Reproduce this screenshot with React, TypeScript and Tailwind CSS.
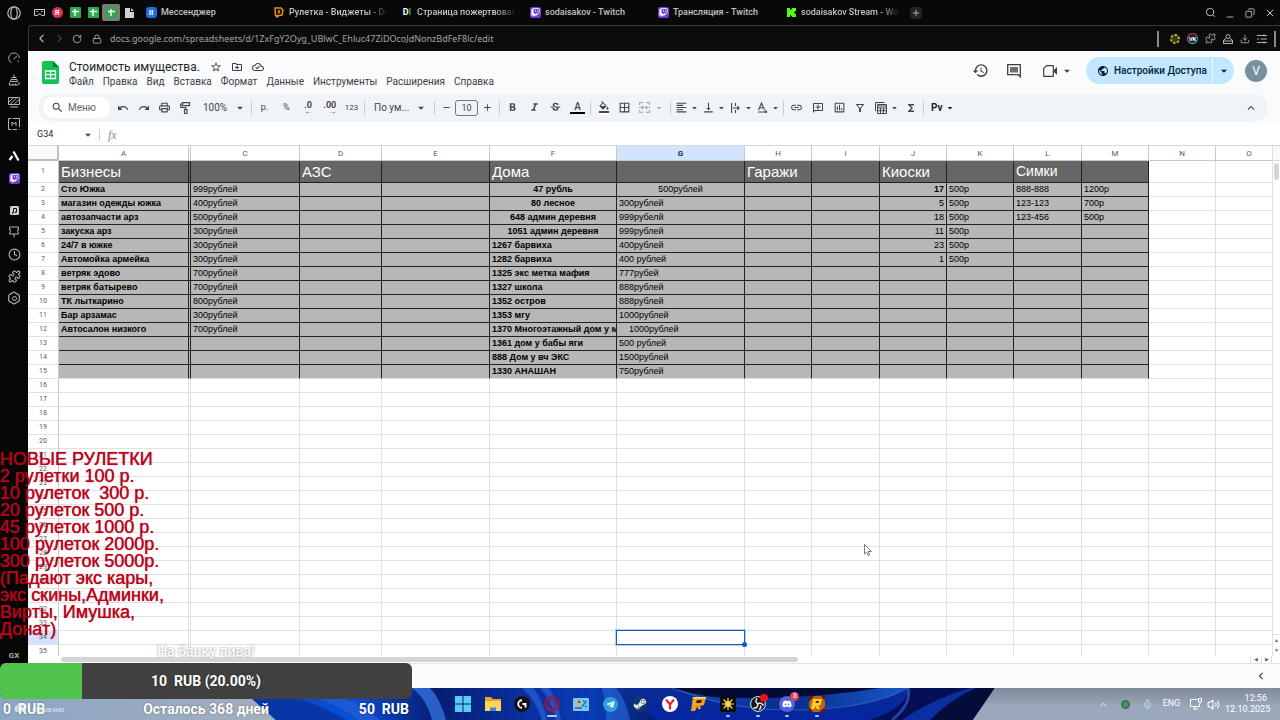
import type { ReactNode } from 'react';
import {
    MdAdd,
    MdArrowDropDown,
    MdBorderAll,
    MdChevronLeft,
    MdExpandLess,
    MdFormatAlignLeft,
    MdFormatBold,
    MdFormatColorFill,
    MdFormatItalic,
    MdFunctions,
    MdHistory,
    MdLink,
    MdOutlineAddComment,
    MdOutlineCloudDone,
    MdOutlineDriveFileMove,
    MdOutlineFilterAlt,
    MdOutlineInsertChart,
    MdOutlinePrint,
    MdPublic,
    MdRedo,
    MdRemove,
    MdSearch,
    MdStarBorder,
    MdStrikethroughS,
    MdUndo,
    MdVerticalAlignBottom,
} from 'react-icons/md';
import { FaDiscord, FaSteamSymbol, FaTelegramPlane, FaTwitch } from 'react-icons/fa';
import {
    ChevronLeft,
    ChevronRight,
    ChevronUp,
    Clock,
    Copy,
    Download,
    Hexagon,
    Lock,
    Mic,
    Minus,
    Plus,
    Puzzle,
    RotateCw,
    Search,
    Volume2,
    X,
} from 'lucide-react';

type Cell = { text: string; bold?: boolean; align?: 'center' | 'right' };
type Row = Record<string, Cell>;

const COLUMNS = [
    { name: 'A', width: 130 },
    { name: 'B', width: 2 },
    { name: 'C', width: 109 },
    { name: 'D', width: 82 },
    { name: 'E', width: 108 },
    { name: 'F', width: 127 },
    { name: 'G', width: 128 },
    { name: 'H', width: 67 },
    { name: 'I', width: 68 },
    { name: 'J', width: 67 },
    { name: 'K', width: 67 },
    { name: 'L', width: 68 },
    { name: 'M', width: 67 },
    { name: 'N', width: 67 },
    { name: 'O', width: 67 },
];

const FILLED_COLUMNS = 'ABCDEFGHIJKLM';
const LAST_FILLED_ROW = 15;
const ROW_COUNT = 35;

const TITLES: Record<string, string> = { A: 'Бизнесы', D: 'АЗС', F: 'Дома', H: 'Гаражи', J: 'Киоски', L: 'Симки' };

const BUSINESSES = [
    ['Сто Южка', '999рублей'],
    ['магазин одежды южка', '400рублей'],
    ['автозапчасти арз', '500рублей'],
    ['закуска арз', '300рублей'],
    ['24/7 в южке', '300рублей'],
    ['Автомойка армейка', '300рублей'],
    ['ветряк эдово', '700рублей'],
    ['ветряк батырево', '700рублей'],
    ['ТК лыткарино', '800рублей'],
    ['Бар арзамас', '300рублей'],
    ['Автосалон низкого', '700рублей'],
];

const HOUSES = [
    ['47 рубль', '500рублей'],
    ['80 лесное', '300рублей'],
    ['648 админ деревня', '999рубелй'],
    ['1051 админ деревня', '999рублей'],
    ['1267 барвиха', '400рублей'],
    ['1282 барвиха', '400 рублей'],
    ['1325 экс метка мафия', '777рубей'],
    ['1327 школа', '888рублей'],
    ['1352 остров', '888рублей'],
    ['1353 мгу', '1000рублей'],
    ['1370 Многоэтажный дом у м', '    1000рублей'],
    ['1361 дом у бабы яги', '500 рублей'],
    ['888 Дом у вч ЭКС', '1500рублей'],
    ['1330 АНАШАН', '750рублей'],
];

const KIOSKS = ['17', '5', '18', '11', '23', '1'];
const SIMS = [['888-888', '1200р'], ['123-123', '700р'], ['123-456', '500р']];

function buildRow(row: number): Row {
    const i = row - 2;
    const cells: Row = {};
    if (i < 0) return cells;
    if (BUSINESSES[i]) {
        cells.A = { text: BUSINESSES[i][0], bold: true };
        cells.C = { text: BUSINESSES[i][1] };
    }
    if (HOUSES[i]) {
        cells.F = { text: HOUSES[i][0], bold: true, align: i < 4 ? 'center' : undefined };
        cells.G = { text: HOUSES[i][1], align: i === 0 ? 'center' : undefined };
    }
    if (KIOSKS[i]) {
        cells.J = { text: KIOSKS[i], bold: i === 0, align: 'right' };
        cells.K = { text: '500р' };
    }
    if (SIMS[i]) {
        cells.L = { text: SIMS[i][0] };
        cells.M = { text: SIMS[i][1] };
    }
    return cells;
}

const MENU = ['Файл', 'Правка', 'Вид', 'Вставка', 'Формат', 'Данные', 'Инструменты', 'Расширения', 'Справка'];

const ROULETTES = [
    'НОВЫЕ РУЛЕТКИ',
    '2 рулетки 100 р.',
    '10 рулеток  300 р.',
    '20 рулеток 500 р.',
    '45 рулеток 1000 р.',
    '100 рулеток 2000р.',
    '300 рулеток 5000р.',
    '(Падают экс кары,',
    'экс скины,Админки,',
    'Вирты, Имушка,',
    'Донат)',
];

/* ---------- browser chrome ---------- */

function OperaIcon() {
    return (
        <svg className="w-[14px] h-[14px]" viewBox="0 0 14 14" fill="none" stroke="#c9c9c9" strokeWidth="1.1">
            <circle cx="7" cy="7" r="6.2" />
            <ellipse cx="7" cy="7" rx="3.2" ry="6" />
        </svg>
    )
}

function GreenSheetIcon() {
    return (
        <svg className="w-[11px] h-[11px]" viewBox="0 0 11 11">
            <rect width="11" height="11" rx="1" fill="#2fa84f" />
            <path d="M2 4.5h7M5 2v7" stroke="#fff" strokeWidth="1.4" />
        </svg>
    )
}

function TwitchBadge() {
    return <FaTwitch className="w-[11px] h-[11px] p-px rounded-xs bg-[#6d3fd0] text-white" />;
}

function Tab({ icon, title, fade }: { icon: ReactNode; title: string; fade?: boolean }) {
    return (
        <button type="button" className="flex items-center w-32 min-w-0 h-full gap-1 pl-[3px] pr-2.5">
            <span className="flex items-center justify-center w-3 h-3 shrink-0">{icon}</span>
            <span className={`overflow-hidden whitespace-nowrap text-[9px] font-medium text-[#c4c4c4] ${fade ? 'mask-r-from-80%' : ''}`}>{title}</span>
        </button>
    )
}

function TabBar() {
    return (
        <header className="flex items-center h-[25px] shrink-0 bg-[#080808] text-[#c9c9c9]">
            <button type="button" aria-label="Opera" className="flex justify-center w-7 mr-0.5"><OperaIcon /></button>
            <div className="flex items-center mr-1">
                <button type="button" aria-label="Игры" className="flex justify-center w-[18px]">
                    <svg className="w-[11px] h-[11px]" viewBox="0 0 11 11" fill="none" stroke="currentColor">
                        <path d="M.5 2.5h10v6h-3l-1-1.5h-2l-1 1.5h-3z" />
                        <path d="M2.5 4.5h1.5M7 4.5h1.5" />
                    </svg>
                </button>
                <button type="button" className="flex justify-center w-[18px]">
                    <span className="w-[11px] h-[11px] rounded-full bg-[#e0314b] text-white text-[8px] leading-[11px] font-bold">Я</span>
                </button>
                <button type="button" aria-label="Таблица 1" className="flex justify-center w-[18px]"><GreenSheetIcon /></button>
                <button type="button" aria-label="Таблица 2" className="flex justify-center w-[18px]"><GreenSheetIcon /></button>
                <button type="button" aria-label="Таблица 3" className="flex items-center justify-center w-[18px] h-[17px] rounded-xs bg-[#777c77]"><GreenSheetIcon /></button>
                <button type="button" aria-label="Документ" className="flex justify-center w-[18px]">
                    <svg className="w-[9px] h-[10px]" viewBox="0 0 9 10"><path d="M0 0h5v4h4v6H0zM6 0l3 3H6z" fill="#d0d0d0" /></svg>
                </button>
            </div>
            <Tab title="Мессенджер" icon={<span className="w-[11px] h-[11px] rounded-[3px] bg-[#1f6fe0] text-white text-[8px] leading-[11px] font-bold">II</span>} />
            <Tab
                fade
                title="Рулетка - Виджеты - Donate"
                icon={
                    <svg className="w-[10px] h-[11px]" viewBox="0 0 10 11" fill="none" stroke="#f28a1c" strokeWidth="1.5">
                        <path d="M1 1h6l2 2-1 5-3 .5L3 10V8.5H1.5z" />
                        <path d="M4.5 3.5h1.5l-.5 2.5H4z" strokeWidth="1" />
                    </svg>
                }
            />
            <Tab fade title="Страница пожертвований" icon={<span className="text-[9px] font-bold text-white">D<span className="text-[#2fa84f]">I</span></span>} />
            <Tab title="sodaisakov - Twitch" icon={<TwitchBadge />} />
            <Tab title="Трансляция - Twitch" icon={<TwitchBadge />} />
            <Tab
                fade
                title="sodaisakov Stream - Watch Live"
                icon={
                    <svg className="w-[9px] h-[9px]" viewBox="0 0 9 9"><path d="M0 0h3v2h1V1h1V0h4v3H8v1H7v1h1v1h1v3H5V8H4V7H3v2H0z" fill="#53fc18" /></svg>
                }
            />
            <button type="button" aria-label="Новая вкладка" className="flex items-center justify-center w-3 h-3 rounded-xs bg-[#222]"><Plus className="w-[10px] h-[10px]" /></button>
            <div className="flex items-center ml-auto">
                <button type="button" aria-label="Поиск" className="flex justify-center w-5"><Search className="w-[11px] h-[11px]" /></button>
                <button type="button" aria-label="Свернуть" className="flex justify-center w-5 pt-2"><Minus className="w-[10px] h-[10px]" /></button>
                <button type="button" aria-label="Развернуть" className="flex justify-center w-5"><Copy className="w-[10px] h-[10px] -scale-x-100" /></button>
                <button type="button" aria-label="Закрыть" className="flex justify-center w-5"><X className="w-3 h-3" /></button>
            </div>
        </header>
    )
}

function SideBar() {
    const line = { className: 'w-3 h-3', viewBox: '0 0 12 12', fill: 'none', stroke: 'currentColor' };
    const groups: { name: string; icon: ReactNode }[][] = [
        [
            { name: 'GX Control', icon: <svg {...line}><path d="M3.5 10.7A5.2 5.2 0 1 1 11.2 6M5.5 7.2l3.5-3.4M10 8.5l.5 1.5" /></svg> },
            { name: 'GX Cleaner', icon: <svg {...line}><path d="M6 .5v3M3.5 3.5h5M3 5.5h6l.5 2h-7zM2 8l-1 3h9M5 11V9.5M7.5 11V9.5M11 8v3" /></svg> },
            { name: 'GX Mods', icon: <svg {...line}><path d="M.5 1.5h11v7H.5zM2 11h8M1 6l4.5-4.5M2 8.5l7-7M6 8.5l5.5-5.5" /></svg> },
            { name: 'GX Music', icon: <svg {...line}><path d="M3.5.5h-3v11h3M5 11.5h4M11.5 9V.5H5M11.5 11v.5M4 8V4l2 2 2-2v4" /></svg> },
        ],
        [
            { name: 'Aria', icon: <svg {...line} strokeWidth="2.2" stroke="#fff"><path d="M1.5 10l3-4M5.5 1.5L10.5 10.5" /></svg> },
            { name: 'Twitch', icon: <TwitchBadge /> },
        ],
        [
            { name: 'Плеер', icon: <svg className="w-[9px] h-[9px]" viewBox="0 0 9 9"><rect width="9" height="9" rx="1.5" fill="#cfcfcf" /><path d="M3.5 6.5V2.5h3v3.5" stroke="#111" fill="none" /><path d="M2 6h1.5v1.5H2zM5 5.5h1.5V7H5z" fill="#111" /></svg> },
            { name: 'Закрепления', icon: <svg {...line}><path d="M1.5 1h9v2.5H9.5L10.5 8h-9l1-4.5h-1zM6 8v3.5" /></svg> },
            { name: 'История', icon: <Clock className="w-[13px] h-[13px]" /> },
            { name: 'Расширения', icon: <Puzzle className="w-[13px] h-[13px]" /> },
            { name: 'Настройки', icon: <span className="grid place-items-center"><Hexagon className="col-start-1 row-start-1 w-[14px] h-[14px]" /><span className="col-start-1 row-start-1 w-[5px] h-[5px] rounded-full border border-current" /></span> },
        ],
    ];

    return (
        <nav className="flex flex-col items-center gap-[10px] w-7 shrink-0 pt-[22px] bg-[#060606] text-[#b5b5b5]">
            {groups.map((group, i) => (
                <div key={i} className="flex flex-col">
                    {group.map(({ name, icon }) => (
                        <button key={name} type="button" aria-label={name} className="flex items-center justify-center w-7 h-[22px]">{icon}</button>
                    ))}
                </div>
            ))}
            <span className="mt-auto mb-[26px] text-[8px] leading-3 font-semibold">GX</span>
        </nav>
    )
}

function AddressBar() {
    return (
        <div className="flex items-center h-[26px] shrink-0 pl-[3px] border-t border-l border-[#3a3a3a] rounded-tl-sm bg-[#0b0b0b] text-[#b5b5b5]">
            <button type="button" aria-label="Назад" className="flex justify-center w-[18px]"><ChevronLeft className="w-[13px] h-[13px]" /></button>
            <button type="button" aria-label="Вперёд" className="flex justify-center w-[18px] text-[#444]"><ChevronRight className="w-[13px] h-[13px]" /></button>
            <button type="button" aria-label="Обновить" className="flex justify-center w-[18px]"><RotateCw className="w-[10px] h-[10px]" /></button>
            <Lock className="w-[10px] h-[10px] ml-[6px] mr-2" />
            <input
                aria-label="Адрес"
                className="flex-1 min-w-0 text-[9px] leading-4 font-['Noto_Sans'] text-[#a5a5a5] outline-none"
                defaultValue="docs.google.com/spreadsheets/d/1ZxFgY2Oyg_UBlwC_Ehluc47ZiDOcoJdNonzBdFeF8lc/edit"
            />
            <div className="flex items-center gap-[7px] mr-1">
                <span className="w-0.5 h-4 mr-1 bg-[#8a8a8a]" />
                <span className="w-[10px] h-[10px] rounded-full border-2 border-dotted border-[#c6c23a] bg-[#3c3b12]" />
                <span className="flex items-center justify-center w-[11px] h-[11px] rounded-full bg-[conic-gradient(#e33,#38f,#3c6,#b3f,#e33)] p-px">
                    <span className="w-full h-full rounded-full bg-[#222] text-white text-[6px] leading-[9px] font-bold text-center">VK</span>
                </span>
                <Puzzle className="w-[11px] h-[11px]" />
                <svg className="w-[10px] h-[10px]" viewBox="0 0 10 10" fill="none" stroke="currentColor">
                    <circle cx="5" cy="2.5" r="2" />
                    <path d="M3 4.5L.5 6v3.5h9V6L7 4.5M.5 7h9" />
                </svg>
                <Download className="w-[10px] h-[10px]" />
                <svg className="w-[10px] h-[10px]" viewBox="0 0 10 10" stroke="currentColor">
                    <path d="M0 1.5h10M0 5h2M3.5 5H10M0 8.5h10M7 .5v2M7 7.5v2" />
                </svg>
                <span className="w-0.5 h-4 bg-[#8a8a8a]" />
            </div>
        </div>
    )
}

/* ---------- spreadsheet ---------- */

function DocHeader() {
    return (
        <div className="flex items-center h-[43px] shrink-0 pl-3 pr-[13px] bg-[#f9fbfd] text-[#3c4043]">
            <svg className="w-[21px] h-[23px] mr-2" viewBox="0 0 21 23">
                <path d="M4 0h9l6 6v15a2 2 0 0 1-2 2H4a2 2 0 0 1-2-2V2a2 2 0 0 1 2-2z" fill="#11c152" />
                <path d="M13 0l6 6h-6z" fill="#0a7a3c" />
                <path d="M5.5 10h10v7.5h-10zM5.5 13.7h10M10.5 10v7.5" fill="none" stroke="#fff" strokeWidth="1.3" />
            </svg>
            <div className="flex flex-col pt-0.5">
                <div className="flex items-center h-[17px] gap-[9px]">
                    <input aria-label="Название" className="w-[132px] text-[12px] leading-4 text-[#1f1f1f] outline-none" defaultValue="Стоимость имущества." />
                    <button type="button" aria-label="Пометить"><MdStarBorder className="w-3 h-3" /></button>
                    <button type="button" aria-label="Переместить"><MdOutlineDriveFileMove className="w-3 h-3" /></button>
                    <button type="button" aria-label="Статус"><MdOutlineCloudDone className="w-3 h-3" /></button>
                </div>
                <div className="flex gap-[9px] text-[10px] leading-[14px]">
                    {MENU.map((item) => <button key={item} type="button">{item}</button>)}
                </div>
            </div>
            <div className="flex items-center ml-auto pb-1">
                <button type="button" aria-label="История изменений" className="flex justify-center w-[33px]"><MdHistory className="w-[17px] h-[17px]" /></button>
                <button type="button" aria-label="Комментарии" className="flex justify-center w-[33px]">
                    <svg className="w-[14px] h-[14px]" viewBox="0 0 14 14">
                        <path d="M.7.7h12.6v12l-2-2H.7z" fill="none" stroke="currentColor" strokeWidth="1.3" />
                        <path d="M3 3h8v5.5H3z" fill="currentColor" opacity=".75" />
                    </svg>
                </button>
                <button type="button" aria-label="Встреча" className="flex items-center justify-center w-[56px] gap-[2px]">
                    <svg className="w-[15px] h-3" viewBox="0 0 15 12">
                        <path d="M3.5.7h6.8v10.6H.7V3.5z" fill="none" stroke="currentColor" strokeWidth="1.2" strokeLinejoin="round" />
                        <path d="M11 5l3-3v8l-3-3z" fill="currentColor" />
                    </svg>
                    <MdArrowDropDown className="w-[14px] h-[14px]" />
                </button>
                <div className="flex items-center h-[27px] mr-[11px] rounded-full bg-[#c2e7ff] text-[#001d35]">
                    <button type="button" className="flex items-center h-full w-[127px] pl-[11px] gap-[5px] border-r border-[#eef8ff] text-[10px] font-medium whitespace-nowrap">
                        <MdPublic className="w-3 h-3 shrink-0" />
                        Настройки Доступа
                    </button>
                    <button type="button" aria-label="Доступ" className="flex justify-center w-[21px]"><MdArrowDropDown className="w-[14px] h-[14px]" /></button>
                </div>
                <button type="button" className="w-[22px] h-[22px] rounded-full bg-[#78909c] text-white text-xs">V</button>
            </div>
        </div>
    )
}

function Separator() {
    return <span className="w-px h-[14px] shrink-0 mx-0.5 bg-[#c7cad0]" />;
}

function ToolButton({ label, children }: { label: string; children: ReactNode }) {
    return <button type="button" aria-label={label} className="flex items-center justify-center w-[21px] h-5 text-[9px]">{children}</button>;
}

function DropButton({ label, children }: { label: string; children: ReactNode }) {
    return (
        <button type="button" aria-label={label} className="flex items-center h-5">
            <span className="flex justify-center w-4">{children}</span>
            <MdArrowDropDown className="w-[11px] h-3" />
        </button>
    )
}

function Toolbar() {
    const icon = 'w-[13px] h-[13px]';
    return (
        <div className="shrink-0 bg-[#f9fbfd] pl-[10px] pr-3 pb-[3px]">
            <div className="flex items-center h-[27px] pl-[5px] pr-[10px] rounded-full bg-[#f0f4f9] text-[#444746]">
                <label className="flex items-center w-[67px] h-[21px] mr-0.5 pl-2 gap-1 rounded-full bg-white">
                    <MdSearch className={`${icon} shrink-0`} />
                    <input aria-label="Меню" placeholder="Меню" className="min-w-0 w-10 text-[10px] placeholder:text-[#5f6368] outline-none" />
                </label>
                <ToolButton label="Отменить"><MdUndo className="w-3 h-3" /></ToolButton>
                <ToolButton label="Повторить"><MdRedo className="w-3 h-3" /></ToolButton>
                <ToolButton label="Печать"><MdOutlinePrint className={icon} /></ToolButton>
                <ToolButton label="Копировать форматирование">
                    <svg className="w-[11px] h-3" viewBox="0 0 11 12" fill="none" stroke="currentColor" strokeWidth="1.2"><path d="M2.5.7h7v3h-7zM2.5 2H.7v3.5h5V7.5M4.5 7.5h2.5v4H4.5z" /></svg>
                </ToolButton>
                <label className="flex items-center w-[53px] pl-[7px]">
                    <select aria-label="Масштаб" className="appearance-none w-[30px] text-[10px] outline-none"><option>100%</option></select>
                    <MdArrowDropDown className="w-[14px] h-[14px]" />
                </label>
                <Separator />
                <div className="flex justify-between w-[108px]">
                    <ToolButton label="Рубли">р.</ToolButton>
                    <ToolButton label="Проценты">%</ToolButton>
                    <ToolButton label="Меньше знаков">
                        <span className="flex flex-col items-end text-[9px] leading-[7px] font-bold">.0<span className="text-[8px] leading-[5px]">←</span></span>
                    </ToolButton>
                    <ToolButton label="Больше знаков">
                        <span className="flex flex-col items-end text-[9px] leading-[7px] font-bold">.00<span className="text-[8px] leading-[5px]">→</span></span>
                    </ToolButton>
                    <ToolButton label="Форматы"><span className="text-[8px]">123</span></ToolButton>
                </div>
                <Separator />
                <label className="flex items-center w-[65px] pl-[7px]">
                    <select aria-label="Шрифт" className="appearance-none w-10 text-[10px] outline-none"><option>По ум...</option></select>
                    <MdArrowDropDown className="w-[14px] h-[14px]" />
                </label>
                <Separator />
                <button type="button" aria-label="Уменьшить" className="flex justify-center w-[18px]"><MdRemove className="w-[11px] h-[11px]" /></button>
                <input aria-label="Размер шрифта" defaultValue="10" className="w-[23px] h-4 rounded-[3px] border border-[#747775] text-center text-[9px] outline-none" />
                <button type="button" aria-label="Увеличить" className="flex justify-center w-[19px]"><MdAdd className="w-[11px] h-[11px]" /></button>
                <Separator />
                <div className="flex justify-between w-[86px]">
                    <ToolButton label="Жирный"><MdFormatBold className={icon} /></ToolButton>
                    <ToolButton label="Курсив"><MdFormatItalic className={icon} /></ToolButton>
                    <ToolButton label="Зачёркнутый"><MdStrikethroughS className={icon} /></ToolButton>
                    <ToolButton label="Цвет текста">
                        <span className="w-[15px] border-b-2 border-black text-[10px] leading-[11px] font-medium">A</span>
                    </ToolButton>
                </div>
                <Separator />
                <div className="flex items-center w-[75px]">
                    <ToolButton label="Заливка">
                        <span className="border-b-2 border-white"><MdFormatColorFill className="w-3 h-3" /></span>
                    </ToolButton>
                    <ToolButton label="Границы"><MdBorderAll className={icon} /></ToolButton>
                    <button type="button" aria-label="Объединить" disabled className="flex items-center gap-0.5 pl-1 text-[#a9acb0]">
                        <svg className="w-[11px] h-[11px]" viewBox="0 0 11 11" fill="none" stroke="currentColor" strokeWidth="1.2">
                            <path d="M.6 3V.6H4M7 .6h3.4V3M.6 8v2.4H4M7 10.4h3.4V8M0 5.5h4M11 5.5H7M3 4l1.5 1.5L3 7M8 4L6.5 5.5 8 7" />
                        </svg>
                        <MdArrowDropDown className="w-[14px] h-3" />
                    </button>
                </div>
                <Separator />
                <DropButton label="Выравнивание"><MdFormatAlignLeft className={icon} /></DropButton>
                <DropButton label="По вертикали"><MdVerticalAlignBottom className={icon} /></DropButton>
                <DropButton label="Перенос">
                    <svg className="w-[9px] h-[10px]" viewBox="0 0 9 10" fill="none" stroke="currentColor" strokeWidth="1.1"><path d="M.6 0v10M4.5 0v3M4.5 7v3M2 5h6M6.3 3.2L8.2 5 6.3 6.8" /></svg>
                </DropButton>
                <DropButton label="Поворот">
                    <svg className="w-[11px] h-[11px]" viewBox="0 0 11 11" fill="none" stroke="currentColor" strokeWidth="1.1"><path d="M1.5 8L4.5 1 7.5 8M2.5 5.7h4M1 10h8.5M8 8.5l1.7 1.5L8 11" /></svg>
                </DropButton>
                <Separator />
                <div className="flex justify-between w-[85px] mr-0.5">
                    <ToolButton label="Ссылка"><MdLink className={icon} /></ToolButton>
                    <ToolButton label="Комментарий"><MdOutlineAddComment className="w-3 h-3 -scale-x-100" /></ToolButton>
                    <ToolButton label="Диаграмма"><MdOutlineInsertChart className={icon} /></ToolButton>
                    <ToolButton label="Фильтр"><MdOutlineFilterAlt className="w-3 h-3" /></ToolButton>
                </div>
                <DropButton label="Таблицы">
                    <svg className="w-3 h-3" viewBox="0 0 12 12" fill="none" stroke="currentColor"><path d="M.5 9V.5H9.5M2.5 2.5h9v9h-9zM2.5 4h9M2.5 6h9M2.5 8.7h9M5.5 6v5.5M8.5 6v5.5" /></svg>
                </DropButton>
                <ToolButton label="Функции"><MdFunctions className="w-3 h-3" /></ToolButton>
                <Separator />
                <button type="button" className="flex items-center h-5 pl-[5px] text-[10px] font-bold text-[#1f1f1f]">
                    Pv
                    <MdArrowDropDown className="w-[14px] h-3" />
                </button>
                <button type="button" aria-label="Скрыть меню" className="ml-auto"><MdExpandLess className="w-[14px] h-[14px]" /></button>
            </div>
        </div>
    )
}

function FormulaBar() {
    return (
        <div className="flex items-center h-[22px] shrink-0 pt-px pl-[9px] border-b border-[#d5d7da] bg-white text-[#444746]">
            <input aria-label="Ячейка" defaultValue="G34" className="w-[44px] text-[9px] text-[#1f1f1f] outline-none" />
            <MdArrowDropDown className="w-[14px] h-[14px]" />
            <span className="w-px h-3 ml-1 mr-2 bg-[#d0d0d0]" />
            <label htmlFor="formula" className="font-['Liberation_Serif'] italic text-[12px] text-[#8a8d91]">fx</label>
            <input id="formula" className="flex-1 min-w-0 ml-2 text-[9px] outline-none" />
        </div>
    )
}

function GridCell({ column, row, cell }: { column: string; row: number; cell?: Cell }) {
    const filled = FILLED_COLUMNS.includes(column) && row <= LAST_FILLED_ROW;

    if (row === 1 && filled) {
        return (
            <td className={`p-0 border-r border-b border-[#222] bg-[#666666] text-white whitespace-nowrap leading-[21px] ${column === 'B' ? '' : 'pl-0.5'} ${column === 'L' ? 'text-[14px]' : 'text-[15px]'}`}>
                {TITLES[column]}
            </td>
        )
    }

    if (column === 'G' && row === 34) {
        return (
            <td className="relative p-0 border-r border-b border-[#e1e1e1]">
                <span className="absolute -top-px -left-px -right-px -bottom-px border border-[#1a5fb4] outline outline-[#1a5fb4]/30" />
                <span className="absolute -right-[3px] -bottom-[3px] w-[5px] h-[5px] rounded-full bg-[#0b57d0]" />
            </td>
        )
    }

    const colors = filled ? 'border-r-[#222] bg-[#b7b7b7] text-black' : 'border-r-[#e1e1e1]';
    const bottom = filled && row < LAST_FILLED_ROW ? 'border-b-[#222]' : 'border-b-[#e1e1e1]';
    const align = cell?.align === 'center' ? 'text-center' : cell?.align === 'right' ? 'text-right' : 'text-left';
    return (
        <td className={`p-0 ${column === 'B' ? '' : 'px-0.5'} border-r border-b overflow-hidden whitespace-pre ${colors} ${bottom} ${align} ${cell?.bold ? 'font-bold' : ''}`}>
            {cell?.text}
        </td>
    )
}

function Grid() {
    const rows = Array.from({ length: ROW_COUNT }, (_, i) => i + 1);
    return (
        <div className="flex-1 min-w-0 overflow-hidden">
            <table className="w-[1255px] min-w-full table-fixed border-separate border-spacing-0 font-['Liberation_Sans'] text-[9px] leading-[13px]">
                <colgroup>
                    <col style={{ width: 31 }} />
                    {COLUMNS.map(({ name, width }) => <col key={name} style={{ width }} />)}
                </colgroup>
                <thead className="font-[Roboto] text-[8px] text-[#575a5e]">
                    <tr className="h-[15px]">
                        <th className="p-0 border-r-2 border-b-2 border-[#c0c0c0] bg-[#f8f9fa]" />
                        {COLUMNS.map(({ name }) => (
                            <th
                                key={name}
                                scope="col"
                                className={`p-0 border-r border-b border-[#c7c9cc] ${name === 'G' ? 'bg-[#d3e3fd] font-bold text-[#0b2a5b]' : 'font-normal'}`}
                            >
                                {name === 'B' ? '' : name}
                            </th>
                        ))}
                    </tr>
                </thead>
                <tbody>
                    {rows.map((row) => {
                        const cells = buildRow(row);
                        return (
                            <tr key={row} className={row === 1 ? 'h-[22px]' : 'h-[14px]'}>
                                <th scope="row" className={`p-0 border-r border-b border-r-[#c7c9cc] border-b-[#e1e1e1] font-[Roboto] text-[7px] font-normal text-[#575a5e] ${row === 34 ? 'bg-[#d3e3fd]' : ''}`}>
                                    {row}
                                </th>
                                {COLUMNS.map(({ name }) => <GridCell key={name} column={name} row={row} cell={cells[name]} />)}
                            </tr>
                        )
                    })}
                </tbody>
            </table>
        </div>
    )
}

function Sheet() {
    return (
        <>
            <div className="flex flex-1 min-h-0 bg-white">
                <Grid />
                <div className="flex flex-col items-center w-2 shrink-0 border-l border-[#e1e1e1] text-[5px] text-[#666]">
                    <div className="w-full h-[15px] mb-0.5 border-b border-[#d5d7da] bg-[#f8f9fa]" />
                    <div className="w-[5px] h-[17px] rounded-full bg-[#d5d5d5]" />
                    <div className="w-full mt-auto h-[11px] border-t border-[#e1e1e1] text-center leading-[10px]">▲</div>
                    <div className="w-full h-[11px] text-center leading-[10px]">▼</div>
                </div>
            </div>
            <div className="flex items-center h-[7px] shrink-0 pl-[33px] bg-white text-[5px] text-[#666]">
                <div className="flex-1"><div className="w-[62%] h-[5px] rounded-full bg-[#d5d5d5]" /></div>
                <span className="w-[11px] border-l border-[#e1e1e1] text-center">◀</span>
                <span className="w-[11px] mr-2 border-x border-[#e1e1e1] text-center">▶</span>
            </div>
            <div className="flex items-center justify-end h-[25px] shrink-0 pr-3 border-t border-[#e1e3e6] bg-[#f9fbfd] text-[#444746]">
                <button type="button" aria-label="Показать панель"><MdChevronLeft className="w-[14px] h-[14px]" /></button>
            </div>
        </>
    )
}

/* ---------- desktop ---------- */

function Wallpaper() {
    return (
        <svg className="absolute inset-0 w-full h-full" viewBox="0 0 1280 32" preserveAspectRatio="none" aria-hidden="true">
            <defs>
                <linearGradient id="haze" x1="0" x2="1"><stop offset="0" stopColor="#8ba6c4" /><stop offset=".2" stopColor="#a3aebf" /></linearGradient>
                <linearGradient id="bloom" x1="240" x2="995" y1="0" y2="0" gradientUnits="userSpaceOnUse">
                    <stop offset="0" stopColor="#0b3fc0" />
                    <stop offset=".15" stopColor="#0a4fd6" />
                    <stop offset=".26" stopColor="#061f74" />
                    <stop offset=".38" stopColor="#0a2fa0" />
                    <stop offset=".47" stopColor="#0a3db4" />
                    <stop offset=".56" stopColor="#061a60" />
                    <stop offset=".68" stopColor="#04103f" />
                    <stop offset="1" stopColor="#040c38" />
                </linearGradient>
                <linearGradient id="wave" x1="672" x2="908" y1="0" y2="0" gradientUnits="userSpaceOnUse">
                    <stop offset="0" stopColor="#1248b8" />
                    <stop offset=".5" stopColor="#082c8c" />
                    <stop offset="1" stopColor="#1658c8" />
                </linearGradient>
                <linearGradient id="deep" x1="0" x2="0" y1="0" y2="1"><stop offset="0" stopColor="#0a2c94" /><stop offset="1" stopColor="#0524a0" /></linearGradient>
                <linearGradient id="mist" x1="0" x2="0" y1="0" y2="1"><stop offset="0" stopColor="#7f8b9a" /><stop offset=".6" stopColor="#9ba7bb" /></linearGradient>
            </defs>
            <rect width="1280" height="32" fill="url(#haze)" />
            <path d="M240 0h755l-22 32H276z" fill="url(#bloom)" />
            <path d="M240 0l36 32h70Q300 6 256 0z" fill="#0636a8" />
            <path d="M262 0q70 8 96 32h22Q350 6 300 0z" fill="#2a63d8" opacity=".6" />
            <path d="M412 0q14 10 20 32h14Q440 10 430 0z" fill="#3a7ae8" opacity=".7" />
            <path d="M522 0q14 12 20 32h5q-4-20-14-32zM540 0q12 12 16 32h5q-4-20-12-32zM602 0q4 16 4 32h24q-4-20-14-32z" fill="#2f6fe0" opacity=".55" />
            <path d="M628 0q12 22 28 32h240q12-16 12-32z" fill="url(#deep)" />
            <path d="M672 0q60 24 130 22t106-22z" fill="url(#wave)" />
            <path d="M672 0q20 6 40 9 90 4 168-9z" fill="#030a34" />
            <path d="M672 0q60 24 130 22t106-22" stroke="#4a86e4" strokeWidth="1" fill="none" opacity=".5" />
            <path d="M870 32q40-14 38-32h62q-40 12-70 32z" fill="#050f56" />
            <path d="M908 0q4 16-16 32" stroke="#3c62d8" strokeWidth="3" fill="none" opacity=".6" />
            <path d="M970 0q-40 12-68 32h28q22-22 46-32z" fill="#0c2fa0" />
            <path d="M995 0h285v32H973z" fill="url(#mist)" />
        </svg>
    )
}

const TASKBAR_APPS: { name: string; icon: ReactNode; running?: boolean }[] = [
    {
        name: 'Пуск',
        icon: <svg className="w-4 h-4" viewBox="0 0 16 16"><path d="M0 0h7.5v7.5H0zM8.5 0H16v7.5H8.5zM0 8.5h7.5V16H0zM8.5 8.5H16V16H8.5z" fill="#5ccbf8" /></svg>,
    },
    {
        name: 'Проводник',
        icon: <svg className="w-4 h-[14px]" viewBox="0 0 16 14"><path d="M0 0h6l2 2h8v10H0z" fill="#e0a526" /><path d="M0 4h16v10H0z" fill="#ffd45c" /><path d="M5 10.5h6V14H5z" fill="#3f87d8" /></svg>,
    },
    {
        name: 'G HUB',
        icon: <svg className="w-4 h-4" viewBox="0 0 16 16" fill="none"><circle cx="8" cy="8" r="8" fill="#101216" /><path d="M8 4.2A3.8 3.8 0 1 0 8 11.8M8.5 8h3v3.5" stroke="#fff" strokeWidth="1.9" /></svg>,
    },
    {
        name: 'Opera GX',
        icon: <svg className="w-4 h-4" viewBox="0 0 16 16" fill="none" stroke="#8f1b52" strokeWidth="2.2"><circle cx="8" cy="8" r="6.6" /><ellipse cx="8" cy="8" rx="3" ry="6" strokeWidth="1.5" /></svg>,
        running: true,
    },
    {
        name: 'Панель',
        icon: <svg className="w-4 h-[13px]" viewBox="0 0 16 13"><rect width="16" height="13" rx="1" fill="#7ac8ee" /><circle cx="5" cy="5" r="2.6" fill="#f2b23a" /><path d="M5 5V2.4A2.6 2.6 0 0 1 7.6 5z" fill="#1e62b8" /><path d="M9 8.5L13.5 3M10 3h1.5M2 10h7M12 8.5h2" stroke="#1e62b8" strokeWidth="1.3" /></svg>,
    },
    { name: 'Telegram', icon: <span className="flex items-center justify-center w-[15px] h-[15px] rounded-full bg-[#2ba0d9]"><FaTelegramPlane className="w-[9px] h-[9px] text-white" /></span> },
    { name: 'Steam', icon: <span className="flex items-center justify-center w-4 h-4 rounded-full bg-[#10366f]"><FaSteamSymbol className="w-[14px] h-[14px] text-[#e4ebf4]" /></span> },
    {
        name: 'Яндекс',
        icon: <svg className="w-4 h-4" viewBox="0 0 16 16" fill="none"><circle cx="8" cy="8" r="8" fill="#fff" /><path d="M4 3.5l4 5 4-5M8 8v5.5" stroke="#e3262e" strokeWidth="2.2" /></svg>,
    },
    {
        name: 'Radmir',
        icon: <svg className="w-[15px] h-4" viewBox="0 0 15 16"><path d="M2 1h13l-2 8-4 1 1 3H7L6.5 10 4 15H0z" fill="#f4a11f" /><path d="M6 4h5l-1 3H5z" fill="#401c02" /><path d="M2 1h13l-.4 1.5H1.6z" fill="#ffe06a" /></svg>,
    },
    {
        name: 'Sun',
        icon: <svg className="w-4 h-4" viewBox="0 0 16 16"><rect width="16" height="16" rx="1" fill="#0a0a0a" /><circle cx="8" cy="8" r="3" fill="#f6d860" /><path d="M8 2v12M2 8h12M3.5 3.5l9 9M12.5 3.5l-9 9" stroke="#f6d860" strokeWidth="1.2" /></svg>,
        running: true,
    },
    {
        name: 'OBS',
        icon: (
            <span className="relative">
                <svg className="w-4 h-4" viewBox="0 0 16 16" fill="none" stroke="#e8e8e8"><circle cx="8" cy="8" r="7.4" fill="#16161a" /><path d="M7 2.5q-2.5 3.5 1 5.5M3.5 11.5q3.5 2 4.5-3.5M13.5 9.5Q10.5 5.5 8 8M9 13.5q2.5-1 1.5-4" strokeWidth="1.5" /></svg>
                <span className="absolute -top-0.5 -right-0.5 w-2 h-2 rounded-full bg-[#e5121b]" />
            </span>
        ),
        running: true,
    },
    {
        name: 'Discord',
        icon: (
            <span className="relative flex items-center justify-center w-4 h-4 rounded-full bg-[#5461d8]">
                <FaDiscord className="w-[10px] h-[10px] text-white" />
                <span className="absolute -top-1 -right-1 w-[9px] h-[9px] rounded-full bg-[#d9415b] text-white text-[7px] leading-[9px]">8</span>
            </span>
        ),
        running: true,
    },
    {
        name: 'Radmir CRMP',
        icon: <svg className="w-4 h-4" viewBox="0 0 16 16"><rect width="16" height="16" fill="#b8671a" /><path d="M0 0h5L0 6zM16 16h-6l6-5zM12 0h4v5zM0 11l4 5H0z" fill="#6d1414" /><path d="M4 3h9l-1.5 6-2.5.5L11 13H8l-1.5-3L5 13H2z" fill="#ffcf2e" /><path d="M7 5h3l-.5 2h-3z" fill="#5a2505" /></svg>,
        running: true,
    },
];

function Taskbar() {
    return (
        <footer className="relative h-8 shrink-0 overflow-hidden">
            <Wallpaper />
            <div className="relative grid grid-cols-[1fr_auto_1fr] items-center h-full text-white">
                <div className="flex items-end gap-1 h-full pl-3 pb-1 text-[8px] leading-3 text-[#e4eaf2]">
                    <svg className="w-4 h-4" viewBox="0 0 16 16"><path d="M4 12a4 4 0 0 1 1-7 5 5 0 0 1 8 2 3 3 0 0 1 0 5z" fill="#d3dde9" /></svg>
                    Облачно
                </div>
                <div className="flex w-[383px] h-full">
                    {TASKBAR_APPS.map(({ name, icon, running }) => (
                        <button key={name} type="button" aria-label={name} className="flex flex-col items-center justify-end flex-1 h-full">
                            <span className="flex items-center justify-center h-5">{icon}</span>
                            <span className={`h-0.5 mt-px mb-[3px] rounded-full ${running ? 'bg-[#b7c7de]' : ''} ${name === 'Opera GX' ? 'w-[10px]' : 'w-1'}`} />
                        </button>
                    ))}
                </div>
                <div className="flex items-center justify-end pr-[13px]">
                    <button type="button" aria-label="Скрытые значки" className="flex justify-center w-[22px]"><ChevronUp className="w-[11px] h-[11px]" /></button>
                    <span className="flex justify-center w-[22px]"><span className="w-[9px] h-[9px] rounded-full border-2 border-[#2f7a4c] bg-[#5b8f73]" /></span>
                    <button type="button" aria-label="Микрофон" className="flex justify-center w-[22px]"><Mic className="w-[11px] h-[11px] text-[#b9e2f4]" /></button>
                    <button type="button" className="w-[27px] text-[9px]">ENG</button>
                    <button type="button" aria-label="Сеть и звук" className="flex items-center justify-center w-10 gap-[5px]">
                        <svg className="w-3 h-3" viewBox="0 0 12 12" fill="none" stroke="currentColor"><path d="M7.5 1.5h-7v7h9V6M3 11h5M5 8.5V11M8.5.5h3v3.5h-3zM10 4v2" /></svg>
                        <Volume2 className="w-[13px] h-[13px]" />
                    </button>
                    <time className="w-[42px] text-right text-[9px] leading-[11px] whitespace-nowrap">12:56<br />12.10.2025</time>
                </div>
            </div>
        </footer>
    )
}

/* ---------- stream overlays ---------- */

function RouletteNotice() {
    return (
        <ul className="absolute left-0 bottom-[82px] z-10 font-['Liberation_Sans'] text-[18px] leading-[17px] whitespace-pre text-[#b8041c] text-shadow-[0_0_1px_#b8041c]">
            {ROULETTES.map((line) => <li key={line}>{line}</li>)}
        </ul>
    )
}

function DonationGoal() {
    const percent = 20;
    return (
        <section className="absolute left-0 bottom-0 z-10 w-[412px] font-[Roboto] text-[14px] font-bold text-white text-shadow-[0_0_2px_#0006]">
            <h2 className="text-center leading-6 font-medium text-shadow-[0_0_2px_#777]">На банку пива!</h2>
            <div className="relative h-9 rounded-md overflow-hidden bg-[#404040]">
                <div className="h-full bg-[#50c44f]" style={{ width: `${percent}%` }} />
                <span className="absolute inset-0 text-center leading-9 whitespace-pre">10  RUB (20.00%)</span>
            </div>
            <div className="grid grid-cols-[1fr_auto_1fr] px-[3px] leading-[21px] whitespace-pre">
                <span>0  RUB</span>
                <span>Осталось 368 дней</span>
                <span className="text-right">50  RUB</span>
            </div>
        </section>
    )
}

export default function App() {
    return (
        <div className="relative flex flex-col h-screen overflow-hidden bg-[#080808] font-[Roboto,sans-serif]">
            <TabBar />
            <div className="flex flex-1 min-h-0">
                <SideBar />
                <main className="flex flex-col flex-1 min-w-0">
                    <AddressBar />
                    <DocHeader />
                    <Toolbar />
                    <FormulaBar />
                    <Sheet />
                </main>
            </div>
            <Taskbar />
            <RouletteNotice />
            <DonationGoal />
            <svg className="absolute left-[67.5%] top-[75.5%] w-2 h-3" viewBox="0 0 8 12" aria-hidden="true">
                <path d="M.5.5v9.5l2.2-2 1.5 3.5 1.5-.7L4.3 7.5h3z" fill="#fff" stroke="#555" strokeWidth=".8" />
            </svg>
        </div>
    )
}
